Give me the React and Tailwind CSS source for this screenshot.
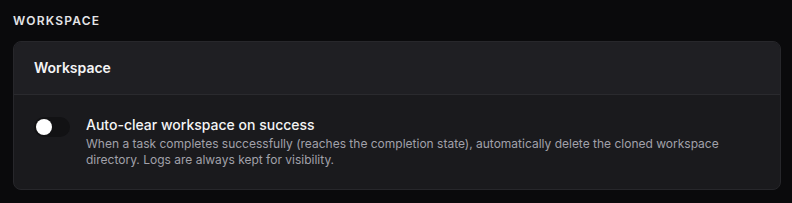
import React from "react";

export default function App() {
  return (
    <div className="min-h-[203px] w-full bg-[#0a0a0c] pl-[13px] pr-[11px] pt-[13px] pb-3" style={{ fontFamily: "Inter, 'Noto Sans', sans-serif" }}>
      <div className="text-xs font-semibold uppercase tracking-[0.1em] text-[#e4e4e7] leading-4">Workspace</div>
      <div className="mt-3 rounded-lg border border-[#27272b] bg-[#1a1a1d] overflow-hidden">
        <div className="border-b border-[#2a2a2e] bg-[#1f1f23] px-5 py-4">
          <div className="text-sm font-semibold leading-5 text-[#f4f4f5]">Workspace</div>
        </div>
        <div className="flex items-start gap-4 px-5 pt-5 pb-[21px]">
          <button className="mt-0.5 flex h-5 w-9 shrink-0 items-center rounded-full bg-[#121214] p-0.5">
            <span className="block h-4 w-4 rounded-full bg-white" />
          </button>
          <div className="min-w-0">
            <div className="text-sm font-medium leading-5 text-[#f4f4f5]">Auto-clear workspace on success</div>
            <div className="mt-px text-xs leading-4 text-[#a1a1aa]">
              When a task completes successfully (reaches the completion state), automatically delete the cloned workspace directory. Logs are always kept for visibility.
            </div>
          </div>
        </div>
      </div>
    </div>
  );
}
